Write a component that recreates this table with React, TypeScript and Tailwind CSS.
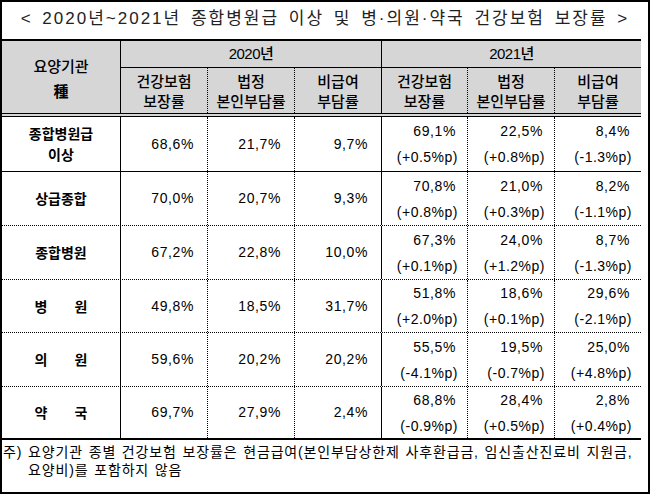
import React from 'react';

type Row = {
  label: string[];
  spread?: boolean;
  y2020: string[];
  y2021: [string, string][];
  cls: string;
};

const rows: Row[] = [
  {
    label: ['종합병원급', '이상'],
    y2020: ['68,6%', '21,7%', '9,7%'],
    y2021: [['69,1%', '(+0.5%p)'], ['22,5%', '(+0.8%p)'], ['8,4%', '(-1.3%p)']],
    cls: 'h-[55px] border-b border-black',
  },
  {
    label: ['상급종합'],
    y2020: ['70,0%', '20,7%', '9,3%'],
    y2021: [['70,8%', '(+0.8%p)'], ['21,0%', '(+0.3%p)'], ['8,2%', '(-1.1%p)']],
    cls: 'h-[54px] border-b border-dotted border-black',
  },
  {
    label: ['종합병원'],
    y2020: ['67,2%', '22,8%', '10,0%'],
    y2021: [['67,3%', '(+0.1%p)'], ['24,0%', '(+1.2%p)'], ['8,7%', '(-1.3%p)']],
    cls: 'h-[54px] border-b border-dotted border-black',
  },
  {
    label: ['병', '원'],
    spread: true,
    y2020: ['49,8%', '18,5%', '31,7%'],
    y2021: [['51,8%', '(+2.0%p)'], ['18,6%', '(+0.1%p)'], ['29,6%', '(-2.1%p)']],
    cls: 'h-[53px] border-b border-dotted border-black',
  },
  {
    label: ['의', '원'],
    spread: true,
    y2020: ['59,6%', '20,2%', '20,2%'],
    y2021: [['55,5%', '(-4.1%p)'], ['19,5%', '(-0.7%p)'], ['25,0%', '(+4.8%p)']],
    cls: 'h-[54px] border-b border-dotted border-black',
  },
  {
    label: ['약', '국'],
    spread: true,
    y2020: ['69,7%', '27,9%', '2,4%'],
    y2021: [['68,8%', '(-0.9%p)'], ['28,4%', '(+0.5%p)'], ['2,8%', '(+0.4%p)']],
    cls: 'h-[53px] border-b-2 border-black',
  },
];

// column widths incl. right border
const w2020 = ['w-[87px] border-r border-dotted', 'w-[87px] border-r border-dotted', 'w-[87px] border-r'];
const w2021 = ['w-[86px] border-r border-dotted', 'w-[87px] border-r border-dotted', 'w-[86px]'];

const subHeads = [
  ['건강보험', '보장률'],
  ['법정', '본인부담률'],
  ['비급여', '부담률'],
];

export default function App() {
  return (
    <div className="w-[650px] h-[494px] border-2 border-black bg-white text-black font-['Liberation_Sans','Noto_Sans_CJK_KR',sans-serif] flex flex-col overflow-hidden">
      {/* title */}
      <div className="h-[37px] shrink-0 flex items-center justify-center pb-[3px] text-[17px] tracking-[2px] [word-spacing:3px] whitespace-nowrap text-[#222]">
        &lt; 2020년~2021년 종합병원급 이상 및 병·의원·약국 건강보험 보장률 &gt;
      </div>

      {/* table */}
      <div className="w-[639px] border-t-2 border-black">
        {/* header */}
        <div className="flex h-[76px] bg-[#d6d6d6] border-b-4 border-double border-black">
          <div className="w-[119px] shrink-0 border-r border-black flex flex-col items-center justify-center text-[15px] leading-[25px] font-medium font-['Noto_Sans_CJK_KR',sans-serif] pt-[1px]">
            <span>요양기관</span>
            <span className="font-bold">種</span>
          </div>
          <div className="flex-1 flex flex-col">
            <div className="flex h-[27px] shrink-0 border-b border-black text-[15px] tracking-[-0.5px] font-medium">
              <div className="w-[261px] shrink-0 border-r border-black flex items-center justify-center">2020년</div>
              <div className="flex-1 flex items-center justify-center">2021년</div>
            </div>
            <div className="flex flex-1 font-['Noto_Sans_CJK_KR',sans-serif] font-medium text-[15px] leading-[20px]">
              {[...w2020, ...w2021].map((w, i) => (
                <div key={i} className={`${w} shrink-0 border-black flex flex-col items-center justify-center`}>
                  <span>{subHeads[i % 3][0]}</span>
                  <span>{subHeads[i % 3][1]}</span>
                </div>
              ))}
            </div>
          </div>
        </div>

        {/* body */}
        {rows.map((r, ri) => (
          <div key={ri} className={`flex ${r.cls}`}>
            <div className="w-[119px] shrink-0 border-r border-black flex flex-col items-center justify-center font-bold text-[14px] leading-[21px] font-['Noto_Sans_CJK_KR',sans-serif]">
              {r.spread ? (
                <div className="w-[53px] flex justify-between">
                  <span>{r.label[0]}</span>
                  <span>{r.label[1]}</span>
                </div>
              ) : (
                r.label.map((l) => <span key={l}>{l}</span>)
              )}
            </div>
            {r.y2020.map((v, i) => (
              <div key={i} className={`${w2020[i]} shrink-0 border-black flex items-center justify-end pr-[13px] text-[14px] tracking-[0.6px]`}>
                {v}
              </div>
            ))}
            {r.y2021.map(([v, d], i) => (
              <div key={i} className={`${w2021[i]} shrink-0 border-black flex flex-col items-end justify-center text-[14px] leading-[26px]`}>
                <span className="pr-[11px] tracking-[0.6px]">{v}</span>
                <span className="pr-[9px] tracking-[0.5px]">{d}</span>
              </div>
            ))}
          </div>
        ))}
      </div>

      {/* footnote */}
      <div className="flex pt-[3px] pl-[1px] text-[14px] leading-[18px] tracking-[0.85px] [word-spacing:1px] whitespace-nowrap">
        <span className="w-[25px] shrink-0">주)</span>
        <span>
          요양기관 종별 건강보험 보장률은 현금급여(본인부담상한제 사후환급금, 임신출산진료비 지원금,
          <br />
          요양비)를 포함하지 않음
        </span>
      </div>
    </div>
  );
}
